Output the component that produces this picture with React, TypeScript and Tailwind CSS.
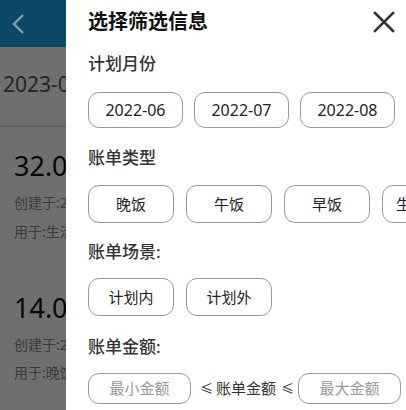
import React from "react";

const font = { fontFamily: '"Noto Sans", "Noto Sans CJK SC", sans-serif' };

function Chip({ label, w, h, t = "text-[15px]", extra = "justify-center" }: { label: string; w: string; h: string; t?: string; extra?: string }) {
  return (
    <div
      className={`${w} ${h} ${t} ${extra} shrink-0 flex items-center rounded-[11px] border border-[#9a9a9a] text-[#222] whitespace-nowrap overflow-hidden`}
    >
      {label}
    </div>
  );
}

export default function App() {
  return (
    <div className="w-[406px] h-[410px] overflow-hidden flex bg-white" style={font}>
      {/* dimmed background page */}
      <div className="w-[66px] shrink-0 flex flex-col bg-[#6f6f6f] overflow-hidden">
        <div className="h-[47px] bg-[#0e4868] flex items-center pl-[10px]">
          <svg width="16" height="22" viewBox="0 0 16 22">
            <polyline points="13,2 4,11 13,20" fill="none" stroke="#7f9bae" strokeWidth="2.4" />
          </svg>
        </div>
        <div className="h-[80px] flex items-center pl-[3px] pb-[2px] border-b-2 border-[#616161] text-[21px] text-[#252525] whitespace-nowrap">
          2023-06
        </div>
        <div className="h-[142px] flex flex-col pl-[14px] whitespace-nowrap">
          <div className="mt-[23px] text-[27px] leading-[32px] text-[#050505]">32.00</div>
          <div className="mt-[11px] text-[14px] leading-[20px] text-[#3a3a3a]">创建于:2023</div>
          <div className="mt-[9px] text-[14px] leading-[20px] text-[#3a3a3a]">用于:生活</div>
        </div>
        <div className="flex flex-col pl-[14px] whitespace-nowrap">
          <div className="mt-[23px] text-[27px] leading-[32px] text-[#050505]">14.00</div>
          <div className="mt-[11px] text-[14px] leading-[20px] text-[#3a3a3a]">创建于:2023</div>
          <div className="mt-[8px] text-[14px] leading-[20px] text-[#3a3a3a]">用于:晚饭</div>
        </div>
      </div>

      {/* filter panel */}
      <div className="flex-1 min-w-0 flex flex-col pl-[22px] overflow-hidden">
        <div className="h-[44px] flex items-center justify-between pr-[11px]">
          <div className="text-[20px] font-bold text-[#111]">选择筛选信息</div>
          <svg width="22" height="22" viewBox="0 0 22 22">
            <path d="M2 2 L20 20 M20 2 L2 20" stroke="#333" strokeWidth="2.6" strokeLinecap="square" />
          </svg>
        </div>

        <div className="h-[40px] flex items-center text-[17px] font-medium text-[#333]">计划月份</div>
        <div className="mt-[8px] flex gap-[11px]">
          <Chip label="2022-06" w="w-[95px]" h="h-[36px]" t="text-[16px]" />
          <Chip label="2022-07" w="w-[95px]" h="h-[36px]" t="text-[16px]" />
          <Chip label="2022-08" w="w-[95px]" h="h-[36px]" t="text-[16px]" />
        </div>

        <div className="mt-[10px] h-[40px] flex items-center text-[17px] font-medium text-[#333]">账单类型</div>
        <div className="mt-[7px] flex gap-[12px]">
          <Chip label="晚饭" w="w-[86px]" h="h-[38px]" />
          <Chip label="午饭" w="w-[86px]" h="h-[38px]" />
          <Chip label="早饭" w="w-[86px]" h="h-[38px]" />
          <Chip label="生活缴费" w="w-[86px]" h="h-[38px]" extra="justify-start pl-[13px]" />
        </div>

        <div className="mt-[9px] h-[40px] flex items-center text-[17px] font-medium text-[#333]">账单场景:</div>
        <div className="mt-[6px] flex gap-[12px]">
          <Chip label="计划内" w="w-[86px]" h="h-[38px]" />
          <Chip label="计划外" w="w-[86px]" h="h-[38px]" />
        </div>

        <div className="mt-[11px] h-[40px] flex items-center text-[17px] font-medium text-[#333]">账单金额:</div>
        <div className="mt-[6px] flex items-center whitespace-nowrap">
          <div className="w-[103px] h-[31px] shrink-0 flex items-center justify-center rounded-[11px] border border-[#9a9a9a] text-[15px] text-[#999]">
            最小金额
          </div>
          <span className="ml-[9px] w-[8px] shrink-0 text-center text-[13px] text-[#333]">≤</span>
          <span className="ml-[8px] text-[15px] text-[#333]">账单金额</span>
          <span className="ml-[5px] w-[8px] shrink-0 text-center text-[13px] text-[#333]">≤</span>
          <div className="ml-[9px] w-[103px] h-[31px] shrink-0 flex items-center justify-center rounded-[11px] border border-[#9a9a9a] text-[15px] text-[#999]">
            最大金额
          </div>
        </div>
      </div>
    </div>
  );
}
